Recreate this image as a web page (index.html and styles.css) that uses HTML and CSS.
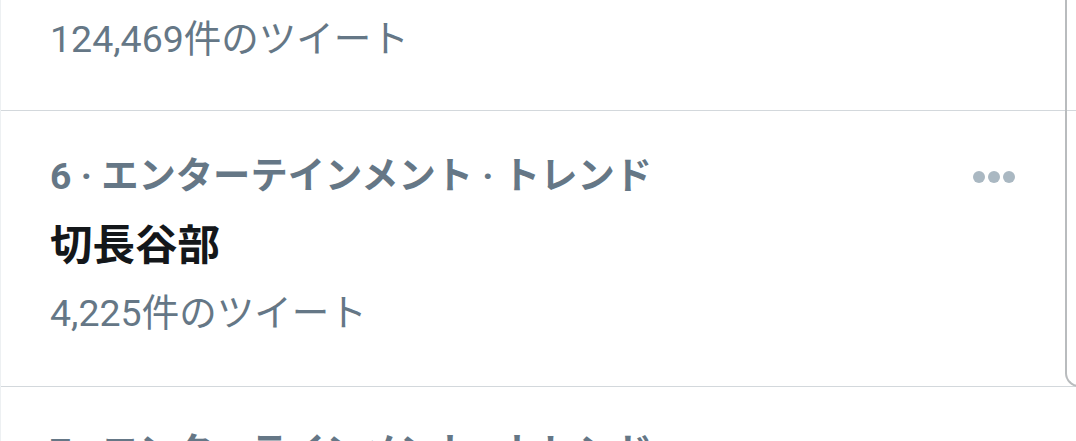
FILE: index.html
```html
<!DOCTYPE html>
<html lang="ja">
    <head>
        <meta charset="utf-8">
        <title>トレンド</title>
        <link rel="stylesheet" href="styles.css">
    </head>
    <body>
        <div id="trends">
            <div class="trend first">
                <div class="meta">5 · エンターテインメント · トレンド</div>
                <div class="name">刀剣乱舞</div>
                <div class="count">124,469件のツイート</div>
            </div>
            <div class="trend">
                <div class="meta">6 · エンターテインメント · トレンド</div>
                <div class="name">切長谷部</div>
                <div class="count">4,225件のツイート</div>
                <div class="more">
                    <svg width="44" height="14" viewBox="0 0 44 14">
                        <circle cx="6" cy="7" r="6"></circle>
                        <circle cx="21" cy="7" r="6"></circle>
                        <circle cx="36" cy="7" r="6"></circle>
                    </svg>
                </div>
            </div>
            <div class="trend">
                <div class="meta">7 · エンターテインメント · トレンド</div>
                <div class="name">&nbsp;</div>
                <div class="count">&nbsp;</div>
            </div>
        </div>
        <div id="frame"></div>
    </body>
</html>
```

FILE: styles.css
```css
html, body {
    margin:0;
    padding:0;
    height:100%;
    overflow:hidden;
    background:#FFFFFF;
}

body {
    font-family: "Roboto", "Noto Sans CJK JP", sans-serif;
    color:#657786;
}

#trends {
    margin-top:-163px;
    border-left:1px solid #EDF0F2;
}

.trend {
    position:relative;
    padding:40px 48px 48px 49px;
    border-bottom:1px solid #D3D8DC;
}

.trend.first {
    padding-bottom:46px;
}

.meta {
    font-size:37.3px;
    font-weight:bold;
    line-height:50px;
}

.name {
    margin-top:17px;
    font-size:42.5px;
    font-weight:bold;
    line-height:56px;
    color:#14171A;
}

.count {
    margin-top:14px;
    font-size:37.5px;
    line-height:50px;
}

.more {
    position:absolute;
    top:59px;
    right:59px;
    line-height:0;
}

.more svg circle {
    fill:#AAB8C2;
}

#frame {
    position:absolute;
    top:-20px;
    left:1065px;
    width:40px;
    height:405px;
    border-left:2px solid #B9BCBE;
    border-bottom:2px solid #B9BCBE;
    border-bottom-left-radius:14px;
}
```
